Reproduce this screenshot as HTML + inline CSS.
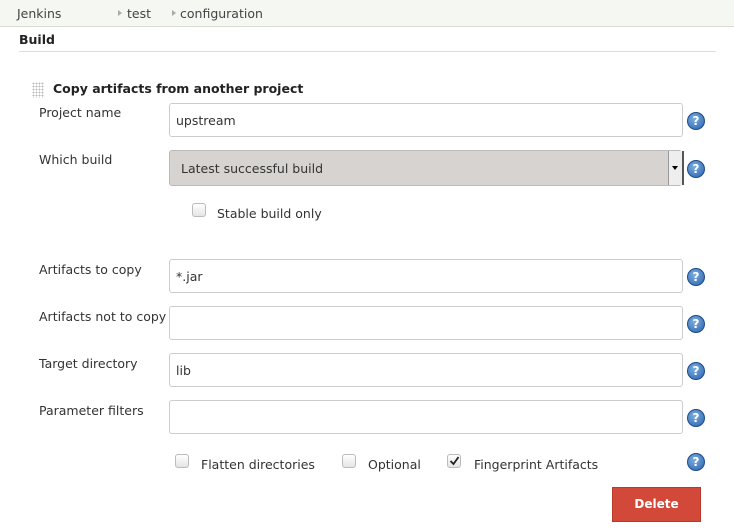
<!DOCTYPE html>
<html><head><style>
body{margin:0;width:734px;height:529px;background:#fff;font-family:"DejaVu Sans",sans-serif;font-size:12.5px;color:#333;position:relative;overflow:hidden}
.a{position:absolute}
.bc{left:0;top:0;width:734px;height:26px;background:#f5f7f2;border-bottom:1px solid #d8dcd2}
.bc span{position:absolute;top:6px;color:#444}
.tri{position:absolute;top:10px;width:0;height:0;border-left:4px solid #aaa;border-top:3px solid transparent;border-bottom:3px solid transparent}
.lbl{left:39px;color:#333}
.inp{left:169px;border:1px solid #ccc;border-radius:3px;background:#fff;box-sizing:border-box;width:514px;height:34px;padding:9px 0 0 6px;color:#333}
.help{width:18px;height:18px;border-radius:50%;background:radial-gradient(circle at 40% 35%,#7aaee0,#2a62ad);border:1px solid #1d4a88;box-sizing:border-box;color:#fff;font-weight:bold;font-size:12px;text-align:center;line-height:16px}
.cb{width:14px;height:14px;border:1px solid #bbb;border-radius:3px;background:linear-gradient(#fff,#e4e4e4);box-sizing:border-box}
</style></head><body>
<div class="a bc">
<span style="left:17px">Jenkins</span><div class="tri" style="left:118px"></div>
<span style="left:127px">test</span><div class="tri" style="left:172px"></div>
<span style="left:180px">configuration</span>
</div>
<div class="a" style="left:19px;top:32px;font-weight:bold;color:#222">Build</div>
<div class="a" style="left:19px;top:51px;width:697px;height:1px;background:#ddd"></div>
<div class="a" style="left:32px;top:82px;width:12px;height:16px;background-image:radial-gradient(#bbb 0.8px,transparent 1px);background-size:3px 3px"></div>
<div class="a" style="left:53px;top:81px;font-weight:bold;color:#222">Copy artifacts from another project</div>
<div class="a lbl" style="top:105px">Project name</div>
<div class="a inp" style="top:103px">upstream</div>
<div class="a help" style="left:687px;top:112px">?</div>
<div class="a lbl" style="top:152px">Which build</div>
<div class="a" style="left:169px;top:150px;width:513px;height:36px;background:#d6d3d0;border:1px solid #bbb;border-radius:3px;box-sizing:border-box;padding:10px 0 0 11px">Latest successful build</div>
<div class="a" style="left:668px;top:151px;width:13px;height:34px;background:#eee;border-left:1px solid #999;border-right:2px solid #555"><div style="position:absolute;left:3px;top:15px;border-top:4px solid #000;border-left:3px solid transparent;border-right:3px solid transparent"></div></div>
<div class="a help" style="left:687px;top:160px">?</div>
<div class="a cb" style="left:192px;top:203px"></div>
<div class="a" style="left:217px;top:206px">Stable build only</div>
<div class="a lbl" style="top:262px">Artifacts to copy</div>
<div class="a inp" style="top:259px">*.jar</div>
<div class="a help" style="left:687px;top:268px">?</div>
<div class="a lbl" style="top:309px">Artifacts not to copy</div>
<div class="a inp" style="top:306px"></div>
<div class="a help" style="left:687px;top:315px">?</div>
<div class="a lbl" style="top:356px">Target directory</div>
<div class="a inp" style="top:353px">lib</div>
<div class="a help" style="left:687px;top:362px">?</div>
<div class="a lbl" style="top:403px">Parameter filters</div>
<div class="a inp" style="top:400px"></div>
<div class="a help" style="left:687px;top:409px">?</div>
<div class="a cb" style="left:175px;top:454px"></div>
<div class="a" style="left:201px;top:457px">Flatten directories</div>
<div class="a cb" style="left:342px;top:454px"></div>
<div class="a" style="left:368px;top:457px">Optional</div>
<div class="a cb" style="left:447px;top:454px"></div>
<svg class="a" style="left:449px;top:455px" width="11" height="11"><path d="M1.5 6 L4.5 9 L9.5 2" stroke="#222" stroke-width="1.8" fill="none"/></svg>
<div class="a" style="left:474px;top:457px">Fingerprint Artifacts</div>
<div class="a help" style="left:687px;top:453px">?</div>
<div class="a" style="left:612px;top:487px;width:89px;height:35px;background:#d24939;border:1px solid #b83a2c;box-sizing:border-box;color:#fff;font-weight:bold;font-size:12px;text-align:center;line-height:33px">Delete</div>
</body></html>
